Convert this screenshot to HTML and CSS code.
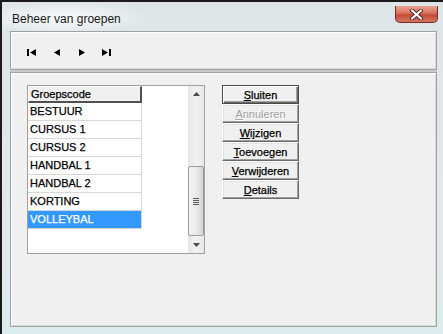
FILE: index.html
```html
<!DOCTYPE html>
<html lang="nl">
<head>
  <meta charset="UTF-8">
  <title>Beheer van groepen</title>
  <link rel="stylesheet" href="styles.css">
</head>
<body>
  <div class="window">
    <div class="titlebar">
      <span class="title">Beheer van groepen</span>
      <div class="close">
        <svg width="13" height="11" viewBox="0 0 13 11">
          <path d="M2 1.5 L11 9.5 M11 1.5 L2 9.5" stroke="#5a2420" stroke-width="4" stroke-linecap="round"/>
          <path d="M2 1.5 L11 9.5 M11 1.5 L2 9.5" stroke="#fff" stroke-width="2.2" stroke-linecap="round"/>
        </svg>
      </div>
    </div>

    <div class="client">
      <!-- navigatie -->
      <div class="toolbar">
        <span class="navbtn">
          <svg width="10" height="7" viewBox="0 0 10 7"><rect x="0" y="0" width="2" height="7" fill="#000"/><polygon points="9,0 3,3.5 9,7" fill="#000"/></svg>
        </span>
        <span class="navbtn">
          <svg width="6" height="7" viewBox="0 0 6 7"><polygon points="6,0 0,3.5 6,7" fill="#000"/></svg>
        </span>
        <span class="navbtn">
          <svg width="6" height="7" viewBox="0 0 6 7"><polygon points="0,0 6,3.5 0,7" fill="#000"/></svg>
        </span>
        <span class="navbtn">
          <svg width="10" height="7" viewBox="0 0 10 7"><polygon points="0,0 6,3.5 0,7" fill="#000"/><rect x="7" y="0" width="2" height="7" fill="#000"/></svg>
        </span>
      </div>

      <div class="panel">
        <div class="listbox">
          <div class="rows">
            <div class="header">Groepscode</div>
            <div class="row">BESTUUR</div>
            <div class="row">CURSUS 1</div>
            <div class="row">CURSUS 2</div>
            <div class="row">HANDBAL 1</div>
            <div class="row">HANDBAL 2</div>
            <div class="row">KORTING</div>
            <div class="row selected">VOLLEYBAL</div>
          </div>
          <div class="scrollbar">
            <div class="arrow">
              <svg width="7" height="4" viewBox="0 0 7 4"><polygon points="0,4 3.5,0 7,4" fill="#4a4a4a"/></svg>
            </div>
            <div class="track">
              <div class="thumb"><span class="grip"></span></div>
            </div>
            <div class="arrow">
              <svg width="7" height="4" viewBox="0 0 7 4"><polygon points="0,0 3.5,4 7,0" fill="#4a4a4a"/></svg>
            </div>
          </div>
        </div>

        <div class="buttons">
          <button class="btn default" type="button"><u>S</u>luiten</button>
          <button class="btn" type="button" disabled><u>A</u>nnuleren</button>
          <button class="btn" type="button"><u>W</u>ijzigen</button>
          <button class="btn" type="button"><u>T</u>oevoegen</button>
          <button class="btn" type="button"><u>V</u>erwijderen</button>
          <button class="btn" type="button"><u>D</u>etails</button>
        </div>
      </div>
    </div>
  </div>
</body>
</html>
```

FILE: styles.css
```css
body {
  margin: 0;
  padding: 0;
  background: #dfe8ec;
  font-family: 'Liberation Sans', Arial, sans-serif;
  font-size: 11px;
  color: #000;
}

.window {
  box-sizing: border-box;
  width: 443px;
  height: 334px;
  border-top: 2px solid #1b1b1b;
  border-left: 2px solid #1b1b1b;
  background: linear-gradient(180deg, #dde5e9 0%, #e2eaee 80%, #d9ecef 100%);
  display: flex;
  flex-direction: column;
}

.titlebar {
  height: 29px;
  display: flex;
  justify-content: space-between;
  align-items: flex-start;
  padding-left: 10px;
  background: radial-gradient(ellipse 90px 16px at 60px 16px, rgba(255,255,255,0.85), rgba(255,255,255,0) 100%);
}
.title {
  font-size: 12px;
  line-height: 14px;
  margin-top: 10px;
  color: #1a1a1a;
}
.close {
  width: 43px;
  height: 17px;
  margin-top: 4px;
  margin-right: 5px;
  box-sizing: border-box;
  border: 1px solid #7a2c24;
  border-top: none;
  border-radius: 0 0 5px 5px;
  background: linear-gradient(180deg, #e8a493 0%, #d7735f 45%, #c44a36 55%, #d27562 100%);
  display: flex;
  align-items: center;
  justify-content: center;
}

.client {
  margin-left: 8px;
  width: 427px;
  height: 296px;
  background: #c9c9c9;
  display: flex;
  flex-direction: column;
  gap: 2px;
}

.toolbar {
  box-sizing: border-box;
  height: 39px;
  background: #f0f0f0;
  border: 1px solid #a0a0a0;
  box-shadow: inset 1px 1px #ffffff, inset -1px -1px #dadada;
  display: flex;
  align-items: center;
  padding-left: 8px;
  padding-top: 3px;
}
.navbtn {
  width: 25px;
  height: 10px;
  display: flex;
  align-items: center;
  justify-content: center;
}

.panel {
  box-sizing: border-box;
  flex: 1;
  background: #f0f0f0;
  border: 1px solid #a0a0a0;
  box-shadow: inset 1px 1px #ffffff, inset -1px -1px #dadada;
  display: flex;
  align-items: flex-start;
  padding: 12px 0 0 16px;
  gap: 17px;
}

.listbox {
  box-sizing: border-box;
  width: 178px;
  height: 169px;
  border: 1px solid #a0a0a0;
  background: #fff;
  display: flex;
  justify-content: space-between;
  -webkit-text-stroke: 0.25px currentColor;
}
.rows {
  width: 114px;
}
.header {
  box-sizing: border-box;
  height: 17px;
  line-height: 15px;
  padding-left: 2px;
  background: #f0f0f0;
  border-top: 1px solid #fff;
  border-left: 1px solid #fff;
  border-right: 2px solid #505050;
  border-bottom: 2px solid #505050;
}
.row {
  box-sizing: border-box;
  height: 18px;
  line-height: 17px;
  padding-left: 2px;
  border-bottom: 1px solid #d6d6d6;
  border-right: 1px solid #d6d6d6;
}
.row.selected {
  background: #3399ff;
  color: #fff;
}

.scrollbar {
  width: 16px;
  display: flex;
  flex-direction: column;
  background: linear-gradient(90deg, #e6e6e6, #f1f1f1 50%, #e8e8e8);
}
.arrow {
  height: 16px;
  display: flex;
  align-items: center;
  justify-content: center;
}
.track {
  flex: 1;
  display: flex;
  flex-direction: column;
  justify-content: flex-end;
  padding-bottom: 1px;
}
.thumb {
  box-sizing: border-box;
  height: 70px;
  border: 1px solid #9b9b9b;
  border-radius: 2px;
  background: linear-gradient(90deg, #f4f4f4, #e9e9e9 55%, #d4d4d4);
  display: flex;
  align-items: center;
  justify-content: center;
}
.grip {
  width: 6px;
  height: 7px;
  background: repeating-linear-gradient(180deg, #5a5a5a 0, #5a5a5a 1px, transparent 1px, transparent 2px);
}

.buttons {
  display: flex;
  flex-direction: column;
  width: 77px;
}
.btn {
  box-sizing: border-box;
  height: 19px;
  width: 77px;
  margin: 0;
  padding: 0;
  font-family: 'Liberation Sans', Arial, sans-serif;
  font-size: 11px;
  color: #000;
  -webkit-text-stroke: 0.25px currentColor;
  background: #f0f0f0;
  border: 1px solid;
  border-color: #ffffff #696969 #696969 #ffffff;
  box-shadow: inset -1px -1px #a0a0a0, inset 1px 1px #e3e3e3;
  border-radius: 0;
}
.btn.default {
  border: 1px solid #4a4a4a;
  box-shadow: inset 1px 1px #ffffff, inset -1px -1px #696969, inset -2px -2px #a0a0a0;
}
.btn:disabled {
  color: #a0a0a0;
  -webkit-text-stroke: 0;
  text-shadow: 1px 1px #ffffff;
}
```
